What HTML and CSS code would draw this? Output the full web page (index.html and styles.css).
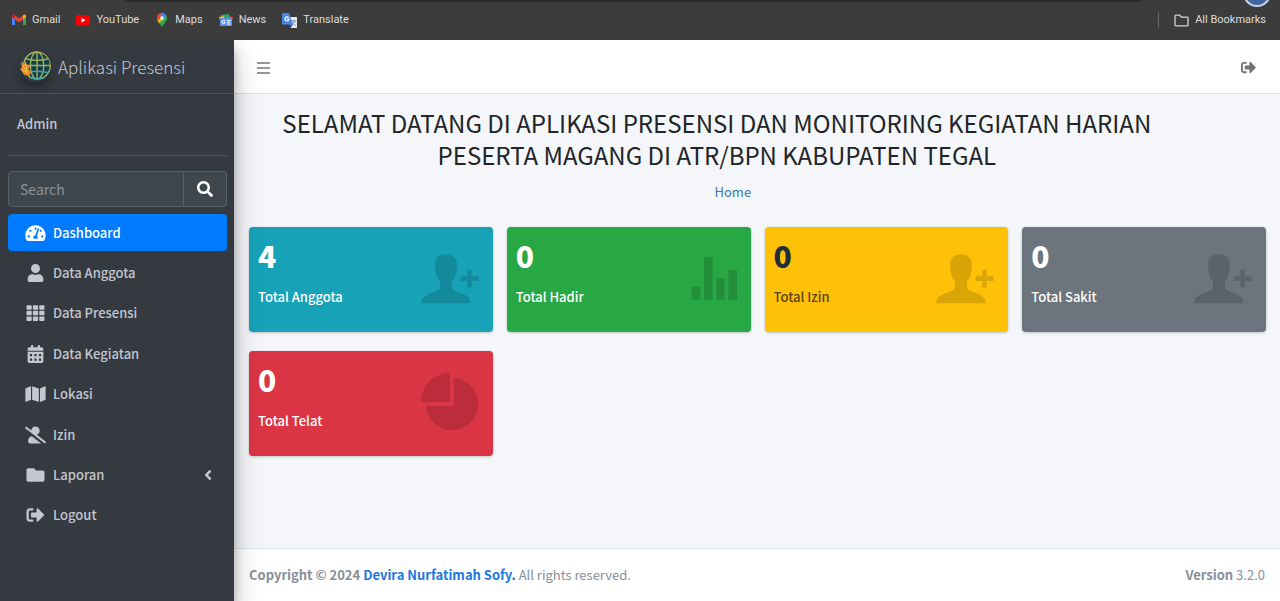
FILE: index.html
```html
<!DOCTYPE html>
<html lang="id">
<head>
<meta charset="utf-8">
<meta name="viewport" content="width=device-width, initial-scale=1">
<title>Aplikasi Presensi</title>
<link rel="stylesheet" href="styles.css">
</head>
<body>
<svg class="sprite" aria-hidden="true">
  <symbol id="sign-out" viewBox="0 0 512 512"><path d="M497 273L329 441c-15 15-41 4.500-41-17v-96H152c-13.300 0-24-10.700-24-24v-96c0-13.300 10.700-24 24-24h136V88c0-21.400 25.900-32 41-17l168 168c9.300 9.400 9.300 24.600 0 34zM192 436v-40c0-6.600-5.400-12-12-12H96c-17.700 0-32-14.300-32-32V160c0-17.700 14.300-32 32-32h84c6.600 0 12-5.400 12-12V76c0-6.600-5.400-12-12-12H96c-53 0-96 43-96 96v192c0 53 43 96 96 96h84c6.600 0 12-5.400 12-12z"/></symbol>
  <symbol id="person-add" viewBox="0 0 174 174"><path d="M74 16c21 0 34 13 34 32 0 7-1 13-2 20-2 14-7 23-13 30v15c0 8 8 12 18 16 24 9 38 14 38 34H1c0-20 14-25 38-34 10-4 18-8 18-16V98c-6-7-11-16-13-30-1-7-2-13-2-20 0-19 11-32 32-32zM139 62h13v20h21v14h-21v20h-13V96h-20V82h20z"/></symbol>
</svg>

<nav class="bookmarks" aria-label="Bookmarks">
  <a class="bookmark" href="#"><svg viewBox="0 0 14 14"><path fill="#4285f4" d="M0 4l3 2v6H1c-.6 0-1-.4-1-1z"/><path fill="#34a853" d="M14 4l-3 2v6h2c.6 0 1-.4 1-1z"/><path fill="#ea4335" d="M0 4V3c0-1.300 1.500-1.800 2.500-1L7 5.500 11.500 2C12.500 1.200 14 1.700 14 3v1L7 9.500z"/><path fill="#c5221f" d="M0 4V3c0-1.300 1.500-1.800 3-.7V6.300z"/><path fill="#fbbc04" d="M14 4V3c0-1.300-1.500-1.800-3-.7v4z"/></svg>Gmail</a>
  <a class="bookmark" href="#"><svg viewBox="0 0 14 14"><rect y="2" width="14" height="10.500" rx="2.500" fill="#f00"/><path fill="#fff" d="M5.500 5v4.500L9.500 7.200z"/></svg>YouTube</a>
  <a class="bookmark" href="#"><svg viewBox="0 0 14 14"><path fill="#34a853" d="M7 14C6 11 2 9 2 5a5 5 0 0 1 10 0c0 4-4 6-5 9z"/><path fill="#fbbc04" d="M2.600 7.500L7 2.500l2 3.500-5.200 4z"/><path fill="#ea4335" d="M2 5a5 5 0 0 1 4-5l1 4-4 3.500z"/><path fill="#4285f4" d="M6 .1a5 5 0 0 1 5.500 2.900L8 6 5.500 3z"/><circle cx="7" cy="5" r="1.800" fill="#f4f4f4"/></svg>Maps</a>
  <a class="bookmark" href="#"><svg viewBox="0 0 14 14"><path fill="#34a853" d="M2 2l8-1 1 5H2z"/><path fill="#ea4335" d="M10 3l4 1-1 4h-3z"/><path fill="#fbbc04" d="M0 4l5-1v4H1z"/><rect x="1" y="5" width="12" height="8" rx="1" fill="#5b94f3"/><path fill="none" stroke="#fff" d="M6 7.800A1.700 1.700 0 1 0 6 10V9.200H4.700M8 7.500h3.500M8 9.200h3M8 11h3.500"/></svg>News</a>
  <a class="bookmark" href="#"><svg class="wide" viewBox="0 0 15 15"><path fill="#e8e8e8" d="M6 4h8c.6 0 1 .4 1 1v9c0 .6-.4 1-1 1H9z"/><path stroke="#6b8fc2" fill="none" d="M9 8h5M11.500 7v1M13 8c-.5 2-2 3-3 4M10.500 9.500l3 3"/><path fill="#4a86e8" d="M1 0h6l4 11.500H1c-.6 0-1-.4-1-1V1c0-.6.4-1 1-1z"/><path fill="#2a56b0" d="M7 11.500h4L8.500 15z"/><path fill="none" stroke="#fff" stroke-width="1.200" d="M6.500 4.500A2 2 0 1 0 7 6H5"/></svg>Translate</a>
  <a class="bookmark all" href="#"><svg class="wide" viewBox="0 0 15 15"><path fill="none" stroke="#d5d5d5" stroke-width="1.300" d="M1 3c0-.5.400-.8.800-.8h3.700l2 2h5.700c.5 0 .8.400.8.800v7c0 .5-.400.800-.8.800H1.800c-.5 0-.8-.400-.8-.8z"/></svg>All Bookmarks</a>
</nav>

<div class="app">
  <aside class="sidebar">
    <a class="brand" href="#">
      <svg class="brand-logo" viewBox="0 0 30 30"><circle cx="16.500" cy="14" r="13" fill="#12414c"/><g fill="none" stroke="#a9b05a" stroke-width="1.300"><circle cx="16.500" cy="14" r="13"/><ellipse cx="16.500" cy="14" rx="6.500" ry="13"/><path d="M16.500 1v26M3.500 14h26M6 7.500c6 2 15 2 21 0"/></g><path d="M5.500 21c6-2 16-2 22 0M9 25.500c4 2 11 2 15 0" fill="none" stroke="#41a5a0" stroke-width="1.500"/><path fill="#e58b25" d="M1 10l3 3 1-4 2 5 3 1-2 3 3 2-2 4-5-1-4-6 2-1z"/><path fill="none" stroke="#f3bd52" d="M2 14l5 6M5 12l2 8M1 18l6 3"/></svg>
      <span>Aplikasi Presensi</span>
    </a>
    <div class="sidebar-body">
      <a class="user" href="#">Admin</a>
      <form class="search">
        <input type="search" placeholder="Search" aria-label="Search">
        <button type="button" aria-label="Search"><svg viewBox="0 0 512 512"><path d="M505 442.700L405.300 343c-4.500-4.500-10.600-7-17-7H372c27.600-35.300 44-79.700 44-128C416 93.100 322.900 0 208 0S0 93.100 0 208s93.100 208 208 208c48.300 0 92.700-16.400 128-44v16.300c0 6.400 2.500 12.500 7 17l99.700 99.700c9.400 9.400 24.600 9.400 33.900 0l28.300-28.300c9.400-9.400 9.400-24.600.1-34zM208 336c-70.700 0-128-57.200-128-128 0-70.700 57.200-128 128-128 70.700 0 128 57.200 128 128 0 70.700-57.200 128-128 128z"/></svg></button>
      </form>
      <nav class="menu">
        <a class="active" href="#"><svg viewBox="0 0 576 512"><path d="M288 32C128.940 32 0 160.940 0 320c0 52.800 14.250 102.260 39.060 144.800 5.610 9.620 16.300 15.200 27.440 15.200h443c11.140 0 21.830-5.580 27.440-15.200C561.750 422.260 576 372.800 576 320c0-159.060-128.940-288-288-288zm0 64c14.710 0 26.580 10.130 30.320 23.650-1.110 2.260-2.640 4.230-3.450 6.670l-9.220 27.670c-5.130 3.490-10.970 6.010-17.640 6.010-17.670 0-32-14.330-32-32S270.330 96 288 96zM96 384c-17.670 0-32-14.330-32-32s14.330-32 32-32 32 14.330 32 32-14.330 32-32 32zm48-160c-17.670 0-32-14.330-32-32s14.330-32 32-32 32 14.330 32 32-14.330 32-32 32zm246.770-72.410l-61.330 184C343.130 347.330 352 364.540 352 384c0 11.720-3.380 22.550-8.880 32H232.880c-5.500-9.450-8.880-20.280-8.880-32 0-33.940 26.500-61.430 59.900-63.590l61.340-184.010c4.170-12.560 17.730-19.450 30.360-15.170 12.570 4.190 19.350 17.790 15.170 30.360zm14.660 57.200l15.520-46.550c3.470-1.290 7.130-2.230 11.050-2.230 17.670 0 32 14.330 32 32s-14.330 32-32 32c-11.380-.01-20.890-6.280-26.570-15.220zM480 384c-17.670 0-32-14.330-32-32s14.330-32 32-32 32 14.330 32 32-14.330 32-32 32z"/></svg>Dashboard</a>
        <a href="#"><svg viewBox="0 0 448 512"><path d="M224 256c70.700 0 128-57.300 128-128S294.700 0 224 0 96 57.300 96 128s57.300 128 128 128zm89.600 32h-16.700c-22.200 10.200-46.900 16-72.900 16s-50.600-5.800-72.900-16h-16.700C60.200 288 0 348.200 0 422.400V464c0 26.500 21.500 48 48 48h352c26.500 0 48-21.500 48-48v-41.600c0-74.200-60.200-134.400-134.400-134.400z"/></svg>Data Anggota</a>
        <a href="#"><svg viewBox="0 0 512 512"><path d="M24 32h101q24 0 24 24v80q0 24-24 24H24q-24 0-24-24V56q0-24 24-24zM205 32h102q24 0 24 24v80q0 24-24 24H205q-24 0-24-24V56q0-24 24-24zM387 32h101q24 0 24 24v80q0 24-24 24H387q-24 0-24-24V56q0-24 24-24zM24 192h101q24 0 24 24v80q0 24-24 24H24q-24 0-24-24v-80q0-24 24-24zM205 192h102q24 0 24 24v80q0 24-24 24H205q-24 0-24-24v-80q0-24 24-24zM387 192h101q24 0 24 24v80q0 24-24 24H387q-24 0-24-24v-80q0-24 24-24zM24 352h101q24 0 24 24v80q0 24-24 24H24q-24 0-24-24v-80q0-24 24-24zM205 352h102q24 0 24 24v80q0 24-24 24H205q-24 0-24-24v-80q0-24 24-24zM387 352h101q24 0 24 24v80q0 24-24 24H387q-24 0-24-24v-80q0-24 24-24z"/></svg>Data Presensi</a>
        <a href="#"><svg viewBox="0 0 448 512"><path fill-rule="evenodd" d="M0 464c0 26.500 21.500 48 48 48h352c26.500 0 48-21.500 48-48V192H0zM64 256h64v64H64zM192 256h64v64h-64zM320 256h64v64h-64zM64 384h64v64H64zM192 384h64v64h-64zM320 384h64v64h-64zM400 64h-48V16c0-8.800-7.200-16-16-16h-32c-8.800 0-16 7.200-16 16v48H160V16c0-8.800-7.200-16-16-16h-32c-8.800 0-16 7.200-16 16v48H48C21.500 64 0 85.500 0 112v48h448v-48c0-26.500-21.500-48-48-48z"/></svg>Data Kegiatan</a>
        <a href="#"><svg viewBox="0 0 576 512"><path d="M0 117.660v346.320c0 11.320 11.430 19.060 21.940 14.860L160 416V32L20.120 87.950A32 32 0 0 0 0 117.660zM192 416l192 64V96L192 32v384zM554.060 33.160L416 96v384l139.880-55.950A32 32 0 0 0 576 394.340V48.020c0-11.320-11.430-19.060-21.940-14.860z"/></svg>Lokasi</a>
        <a href="#"><svg viewBox="0 0 640 512"><path d="M633.800 458.100L362.300 248.300C412.100 230.700 448 183.800 448 128 448 57.300 390.700 0 320 0c-67.100 0-121.500 51.800-126.900 117.400L45.500 3.400C38.500-2 28.500-.8 23 6.200L3.400 31.400c-5.400 7-4.200 17 2.800 22.400l588.400 454.700c7 5.400 17 4.200 22.500-2.800l19.600-25.300c5.400-6.800 4.100-16.900-2.900-22.300zM96 422.400V464c0 26.500 21.500 48 48 48h350.200L207.400 290.300C144.200 301.300 96 356 96 422.400z"/></svg>Izin</a>
        <a href="#"><svg viewBox="0 0 512 512"><path d="M464 128H272l-64-64H48C21.490 64 0 85.490 0 112v288c0 26.510 21.490 48 48 48h416c26.510 0 48-21.490 48-48V176c0-26.510-21.490-48-48-48z"/></svg>Laporan<svg class="caret" viewBox="0 0 256 512"><path d="M31.700 239l136-136c9.400-9.400 24.600-9.400 33.900 0l22.600 22.600c9.400 9.400 9.400 24.600 0 33.900L127.900 256l96.400 96.400c9.400 9.400 9.400 24.600 0 33.900L201.700 409c-9.400 9.400-24.600 9.400-33.900 0l-136-136c-9.500-9.400-9.500-24.600-.1-34z"/></svg></a>
        <a href="#"><svg><use href="#sign-out"/></svg>Logout</a>
      </nav>
    </div>
  </aside>

  <div class="page">
    <header class="topbar">
      <button type="button" aria-label="Menu"><svg viewBox="0 0 15 15"><path d="M1 3h13M1 8h13M1 13h13" stroke="currentColor" stroke-width="1.700"/></svg></button>
      <a href="#" aria-label="Logout"><svg viewBox="0 0 16 16"><use href="#sign-out"/></svg></a>
    </header>
    <main class="content">
      <div class="intro">
        <h1>SELAMAT DATANG DI APLIKASI PRESENSI DAN MONITORING KEGIATAN HARIAN PESERTA MAGANG DI ATR/BPN KABUPATEN TEGAL</h1>
        <ol class="breadcrumb"><li><a href="#">Home</a></li></ol>
      </div>
      <div class="cards">
        <section class="card info"><div><h2>4</h2><p>Total Anggota</p></div><svg><use href="#person-add"/></svg></section>
        <section class="card success"><div><h2>0</h2><p>Total Hadir</p></div><svg viewBox="0 0 174 174"><path d="M38 113h26v39H38zM75 25h26v127H75zM112 88h25v64h-25zM148 63h26v89h-26z"/></svg></section>
        <section class="card warning"><div><h2>0</h2><p>Total Izin</p></div><svg><use href="#person-add"/></svg></section>
        <section class="card secondary"><div><h2>0</h2><p>Total Sakit</p></div><svg><use href="#person-add"/></svg></section>
        <section class="card danger"><div><h2>0</h2><p>Total Telat</p></div><svg viewBox="0 0 174 174"><path d="M87 0v88H0C0 38 38 0 87 0zM98 14a79 79 0 1 1-84 85h84z"/></svg></section>
      </div>
    </main>
    <footer class="footer">
      <div><strong>Copyright © 2024 <a href="#">Devira Nurfatimah Sofy.</a></strong> All rights reserved.</div>
      <div><strong>Version</strong> 3.2.0</div>
    </footer>
  </div>
</div>
</body>
</html>
```
FILE: styles.css
```css
* { box-sizing: border-box; }

body {
  margin: 0;
  min-height: 100vh;
  display: flex;
  flex-direction: column;
  font: 500 13px/22px "Noto Sans CJK SC", "Noto Sans", sans-serif;
  color: #212529;
}

a { color: inherit; text-decoration: none; }
h1, h2, p, ol { margin: 0; padding: 0; }
svg { flex: none; fill: currentColor; }
.sprite { position: absolute; width: 0; height: 0; }

.bookmarks {
  position: relative;
  overflow: hidden;
  height: 40px;
  flex: none;
  display: flex;
  align-items: center;
  gap: 16px;
  padding: 0 14px 0 12px;
  background: #3c3c3c;
  color: #dcdcdc;
  font: 11px/16px Roboto, "Noto Sans", sans-serif;
}
.bookmarks::before {
  content: "";
  position: absolute;
  top: -18px;
  left: 120px;
  right: 134px;
  height: 20px;
  border-radius: 10px;
  background: #282828;
}
.bookmarks::after {
  content: "";
  position: absolute;
  top: -21px;
  right: 9px;
  width: 24px;
  height: 24px;
  border: 2px solid #c3d3ef;
  border-radius: 50%;
  background: #41639d;
}
.bookmark { display: flex; align-items: center; gap: 6px; }
.bookmark svg { width: 14px; height: 14px; }
.bookmark svg.wide { width: 15px; height: 15px; }
.all { margin-left: auto; padding-left: 15px; border-left: 1px solid #696969; }

.app { flex: 1; display: flex; }

.sidebar {
  position: relative;
  z-index: 1;
  width: 234px;
  flex: none;
  background: #343a40;
  color: #c2c7d0;
  box-shadow: 0 13px 26px rgba(0, 0, 0, .25), 0 9px 9px rgba(0, 0, 0, .22);
  clip-path: inset(0 -40px 0 0);
}
.brand {
  height: 54px;
  display: flex;
  align-items: center;
  gap: 7px;
  padding-left: 20px;
  border-bottom: 1px solid #4b545c;
  font-size: 17px;
  font-weight: 300;
}
.brand-logo { width: 31px; height: 31px; border-radius: 50%; box-shadow: 0 6px 10px rgba(0, 0, 0, .3); }
.sidebar-body { padding: 0 7px 0 8px; }
.user {
  display: block;
  padding: 19px 9px 20px;
  border-bottom: 1px solid #4f5962;
}
.search { display: flex; height: 36px; margin: 15px 0 7px; }
.search input, .search button {
  border: 1px solid #56606a;
  background: #3f474e;
  color: #fff;
  font: inherit;
}
.search input {
  flex: 1;
  min-width: 0;
  padding: 0 11px;
  border-radius: 4px 0 0 4px;
  font-size: 14px;
  font-weight: 400;
}
.search input::placeholder { color: #8b9299; opacity: 1; }
.search button {
  width: 43px;
  display: grid;
  place-items: center;
  padding: 0;
  border-left: 0;
  border-radius: 0 4px 4px 0;
}
.search svg { width: 16px; height: 16px; }
.menu {
  display: flex;
  flex-direction: column;
  justify-content: space-between;
  min-height: 320px;
}
.menu a {
  display: flex;
  align-items: center;
  gap: 7px;
  height: 37px;
  padding: 0 15px 0 17px;
  border-radius: 4px;
}
.menu .active { background: #007bff; color: #fff; }
.menu svg { width: 21px; height: 18px; }
.menu .caret { width: 8px; height: 16px; margin-left: auto; }

.page { flex: 1; min-width: 0; display: flex; flex-direction: column; background: #f4f6f9; }
.topbar {
  height: 54px;
  flex: none;
  display: flex;
  align-items: center;
  justify-content: space-between;
  padding: 1px 24px 0 22px;
  border-bottom: 1px solid #dee2e6;
  background: #fff;
  color: #737475;
}
.topbar a { display: flex; }
.topbar button { display: flex; padding: 0; border: 0; background: none; color: inherit; }
.topbar svg { width: 15px; height: 15px; }

.content { flex: 1; padding: 13px 14px 24px 15px; }
.intro { width: 92%; text-align: center; }
h1 { font-size: 24px; line-height: 32px; font-weight: 400; }
.breadcrumb { list-style: none; padding: 10px 0 0 32px; color: #337ab7; font-weight: 400; }
.cards {
  display: grid;
  grid-template-columns: repeat(4, 1fr);
  gap: 19px 14px;
  margin-top: 24px;
}
.card {
  display: flex;
  justify-content: space-between;
  align-items: flex-start;
  min-height: 105px;
  padding: 8px 14px 9px 9px;
  border-radius: 4px;
  box-shadow: 0 0 1px rgba(0, 0, 0, .13), 0 1px 3px rgba(0, 0, 0, .2);
  color: #fff;
}
.card svg { width: 58px; height: 58px; margin-top: 14px; color: rgba(0, 0, 0, .15); }
h2 { font-size: 30px; line-height: 40px; font-weight: 900; }
.card p { margin-top: 11px; }
.info { background: #17a2b8; }
.success { background: #28a745; }
.warning { background: #ffc107; color: #1f2d3d; }
.warning p { color: #5a4312; }
.secondary { background: #6c757d; }
.danger { background: #dc3545; }

.footer {
  display: flex;
  justify-content: space-between;
  padding: 15px;
  border-top: 1px solid #dee2e6;
  background: #fff;
  color: #869099;
  font-weight: 400;
}
.footer a { color: #1d77e0; }
```
